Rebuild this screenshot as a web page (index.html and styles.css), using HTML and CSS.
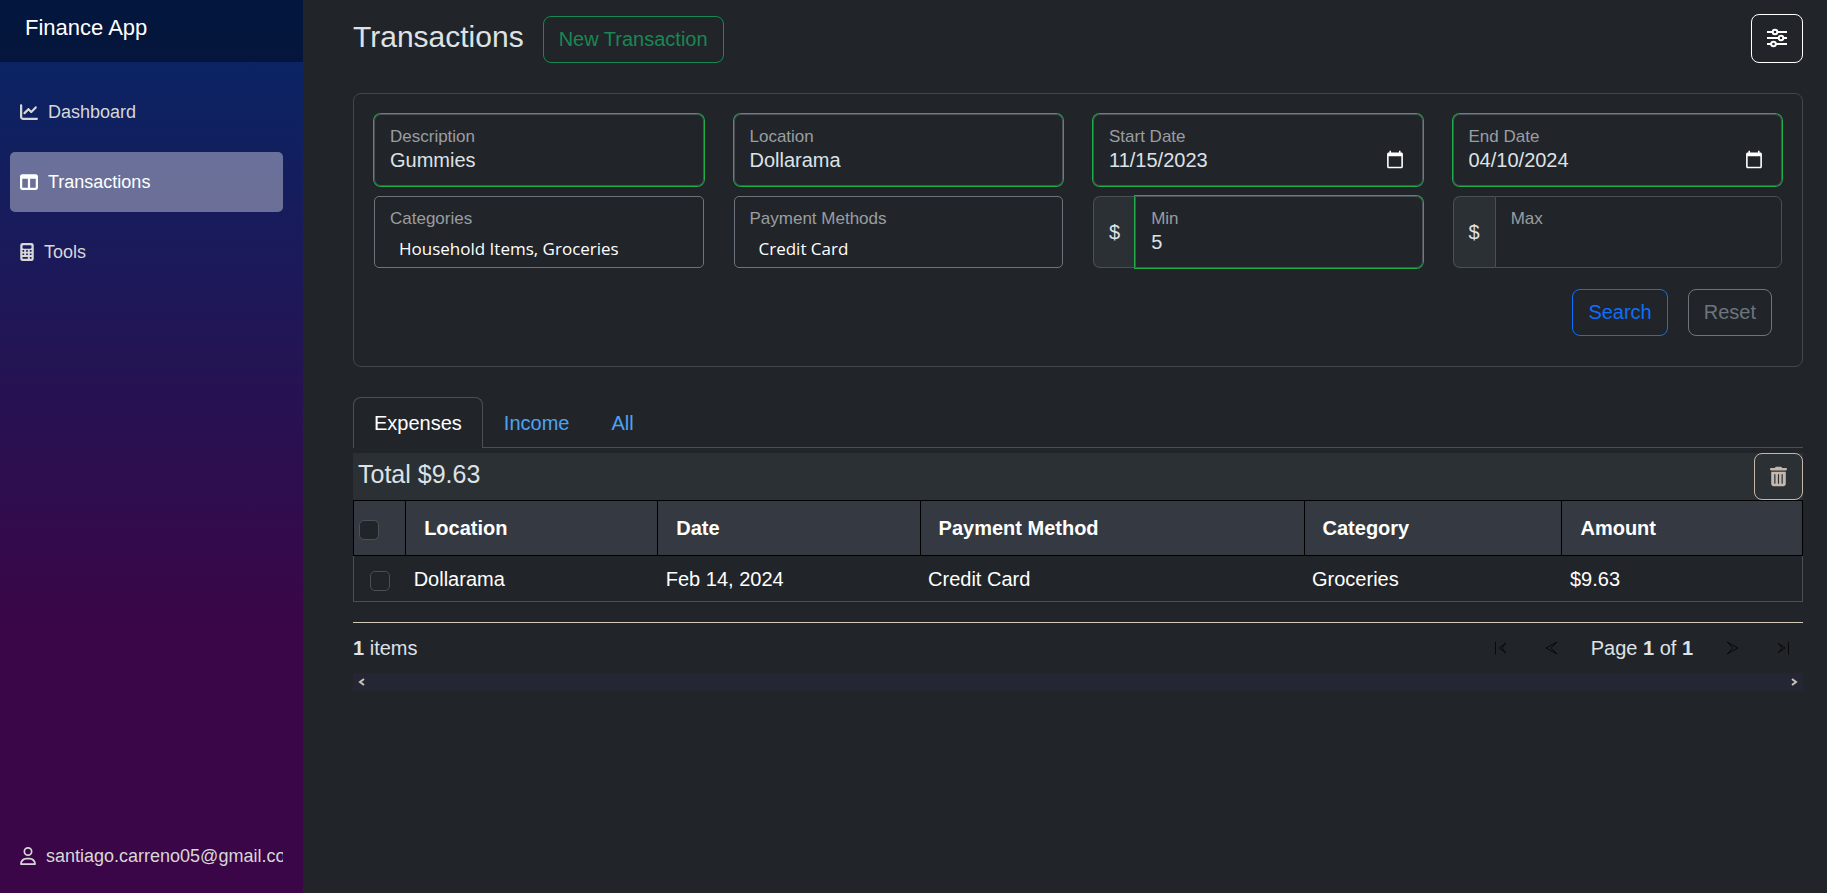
FILE: index.html
```html
<!DOCTYPE html>
<html lang="en">
<head>
<meta charset="utf-8">
<title>Transactions - Finance App</title>
<link rel="stylesheet" href="styles.css">
</head>
<body>
<div class="page">
  <aside class="sidebar">
    <div class="brand-bar"><a class="brand" href="#">Finance App</a></div>
    <nav class="nav">
      <a class="nav-item" href="#">
        <svg class="icon-18" viewBox="0 0 512 512" aria-hidden="true"><path d="M64 64c0-17.700-14.300-32-32-32S0 46.300 0 64V400c0 44.200 35.800 80 80 80H480c17.700 0 32-14.300 32-32s-14.300-32-32-32H80c-8.800 0-16-7.200-16-16V64zm406.600 86.600c12.500-12.500 12.500-32.800 0-45.300s-32.800-12.500-45.300 0L320 210.700l-57.400-57.400c-12.500-12.500-32.800-12.500-45.300 0l-112 112c-12.500 12.500-12.500 32.800 0 45.300s32.800 12.500 45.300 0L240 221.300l57.400 57.400c12.500 12.500 32.800 12.500 45.300 0l128-128z"/></svg>
        Dashboard
      </a>
      <a class="nav-item active" href="#" aria-current="page">
        <svg class="icon-18" viewBox="0 0 512 512" aria-hidden="true"><path d="M0 96C0 60.700 28.700 32 64 32H448c35.300 0 64 28.700 64 64V416c0 35.300-28.700 64-64 64H64c-35.300 0-64-28.700-64-64V96zm64 64V416H224V160H64zm384 0H288V416H448V160z"/></svg>
        Transactions
      </a>
      <a class="nav-item" href="#">
        <svg class="icon-14" viewBox="0 0 384 512" aria-hidden="true"><path fill-rule="evenodd" d="M64 0H320a64 64 0 0 1 64 64V448a64 64 0 0 1-64 64H64a64 64 0 0 1-64-64V64A64 64 0 0 1 64 0zM96 64a32 32 0 0 0-32 32v32a32 32 0 0 0 32 32H288a32 32 0 0 0 32-32V96a32 32 0 0 0-32-32zM64 200v48h48v-48zM168 200v48h48v-48zM272 200v48h48v-48zM64 296v48h48v-48zM168 296v48h48v-48zM272 296v48h48v-48zM64 400v48h152v-48zM272 400v48h48v-48z"/></svg>
        Tools
      </a>
    </nav>
    <a class="nav-item account" href="#">
      <svg class="icon-16" viewBox="0 0 448 512" aria-hidden="true"><path d="M304 128a80 80 0 1 0 -160 0 80 80 0 1 0 160 0zM96 128a128 128 0 1 1 256 0A128 128 0 1 1 96 128zM49.300 464H398.700c-8.900-63.300-63.300-112-129-112H178.300c-65.700 0-120.100 48.700-129 112zM0 482.300C0 383.800 79.800 304 178.300 304h91.400C368.200 304 448 383.800 448 482.300c0 16.400-13.300 29.700-29.700 29.700H29.700C13.300 512 0 498.700 0 482.300z"/></svg>
      <span class="account-name">santiago.carreno05@gmail.com</span>
    </a>
  </aside>

  <main class="content">
    <header class="page-header">
      <h1 class="title">Transactions</h1>
      <button class="btn btn-success" type="button">New Transaction</button>
      <button class="btn btn-filter" type="button" aria-label="Toggle filters">
        <svg class="icon-filter" viewBox="0 0 20 20" aria-hidden="true"><path d="M0 4h5.500M10.500 4H20M0 10h11.500M16.500 10H20M0 16h4M9 16h11"/><circle cx="8" cy="4" r="2.300"/><circle cx="14" cy="10" r="2.300"/><circle cx="6.500" cy="16" r="2.300"/></svg>
      </button>
    </header>

    <form class="filters">
      <div class="filter-grid">
        <div class="field valid">
          <label class="field-label" for="description">Description</label>
          <input class="field-input" id="description" type="text" value="Gummies">
        </div>
        <div class="field valid">
          <label class="field-label" for="location">Location</label>
          <input class="field-input" id="location" type="text" value="Dollarama">
        </div>
        <div class="field valid">
          <label class="field-label" for="start">Start Date</label>
          <input class="field-input" id="start" type="date" value="2023-11-15">
        </div>
        <div class="field valid">
          <label class="field-label" for="end">End Date</label>
          <input class="field-input" id="end" type="date" value="2024-04-10">
        </div>
        <div class="field picker">
          <label class="field-label" for="categories">Categories</label>
          <button class="picker-value" id="categories" type="button">Household Items, Groceries</button>
        </div>
        <div class="field picker">
          <label class="field-label" for="methods">Payment Methods</label>
          <button class="picker-value" id="methods" type="button">Credit Card</button>
        </div>
        <div class="input-group">
          <span class="addon">$</span>
          <div class="field grouped valid">
            <label class="field-label" for="min">Min</label>
            <input class="field-input" id="min" type="text" inputmode="decimal" value="5">
          </div>
        </div>
        <div class="input-group">
          <span class="addon">$</span>
          <div class="field grouped">
            <label class="field-label" for="max">Max</label>
            <input class="field-input" id="max" type="text" inputmode="decimal">
          </div>
        </div>
      </div>
      <div class="filter-actions">
        <button class="btn btn-primary" type="button">Search</button>
        <button class="btn btn-secondary" type="button">Reset</button>
      </div>
    </form>

    <div class="tabs" role="tablist">
      <button class="tab selected" type="button" role="tab" aria-selected="true">Expenses</button>
      <button class="tab" type="button" role="tab" aria-selected="false">Income</button>
      <button class="tab" type="button" role="tab" aria-selected="false">All</button>
    </div>

    <div class="total-bar">
      <span class="total">Total $9.63</span>
      <button class="btn btn-delete" type="button" aria-label="Delete selected">
        <svg class="icon-trash" viewBox="0 0 448 512" aria-hidden="true"><path fill-rule="evenodd" d="M135.200 17.700L128 32H32C14.300 32 0 46.300 0 64S14.300 96 32 96H416c17.700 0 32-14.300 32-32s-14.300-32-32-32H320l-7.200-14.300C307.400 6.800 296.300 0 284.200 0H163.800c-12.100 0-23.200 6.800-28.600 17.700zM32 128H416V448c0 35.300-28.700 64-64 64H96c-35.300 0-64-28.700-64-64V128zm96 64c-8.800 0-16 7.200-16 16V432c0 8.800 7.200 16 16 16s16-7.200 16-16V208c0-8.800-7.200-16-16-16zm96 0c-8.800 0-16 7.200-16 16V432c0 8.800 7.200 16 16 16s16-7.200 16-16V208c0-8.800-7.200-16-16-16zm96 0c-8.800 0-16 7.200-16 16V432c0 8.800 7.200 16 16 16s16-7.200 16-16V208c0-8.800-7.200-16-16-16z"/></svg>
      </button>
    </div>

    <table class="grid">
      <colgroup><col class="col-check"><col class="col-location"><col class="col-date"><col class="col-method"><col class="col-category"><col class="col-amount"></colgroup>
      <thead>
        <tr>
          <th class="check-head"><input class="check" type="checkbox" aria-label="Select all"></th>
          <th>Location</th><th>Date</th><th>Payment Method</th><th>Category</th><th>Amount</th>
        </tr>
      </thead>
      <tbody>
        <tr>
          <td class="check-cell"><input class="check" type="checkbox" aria-label="Select Dollarama"></td>
          <td>Dollarama</td><td>Feb 14, 2024</td><td>Credit Card</td><td>Groceries</td><td>$9.63</td>
        </tr>
      </tbody>
    </table>

    <footer class="pager">
      <div class="count"><strong>1</strong> items</div>
      <button class="page-btn" type="button" disabled aria-label="First page"><svg class="icon-page" viewBox="0 0 14 14" aria-hidden="true"><path d="M1.500 1v12.500M12 2L5 7l7 5M12 2L8 7l4 5"/></svg></button>
      <button class="page-btn" type="button" disabled aria-label="Previous page"><svg class="icon-page" viewBox="0 0 14 14" aria-hidden="true"><path d="M13 1L2 7l11 6M13 1L7 7l6 6"/></svg></button>
      <div class="page-text">Page <strong>1</strong> of <strong>1</strong></div>
      <button class="page-btn" type="button" disabled aria-label="Next page"><svg class="icon-page" viewBox="0 0 14 14" aria-hidden="true"><path d="M1 1l11 6-11 6M1 1l6 6-6 6"/></svg></button>
      <button class="page-btn" type="button" disabled aria-label="Last page"><svg class="icon-page" viewBox="0 0 14 14" aria-hidden="true"><path d="M12.500 1v12.500M2 2l7 5-7 5M2 2l4 5-4 5"/></svg></button>
    </footer>

    <div class="scroll-track">
      <svg class="icon-scroll" viewBox="0 0 8 8" aria-hidden="true"><path d="M6 1L2 4l4 3"/></svg>
      <svg class="icon-scroll" viewBox="0 0 8 8" aria-hidden="true"><path d="M2 1l4 3-4 3"/></svg>
    </div>
  </main>
</div>
</body>
</html>
```
FILE: styles.css
```css
* { box-sizing: border-box; }

body {
  margin: 0;
  background: #212529;
  color: #dee2e6;
  color-scheme: dark;
  font: 20px/30px "Liberation Sans", Arial, sans-serif;
}

button, input { font: inherit; color: inherit; }
svg { display: block; flex: none; fill: currentColor; }

.page { display: flex; min-height: 100vh; }

/* Sidebar */
.sidebar {
  display: flex;
  flex-direction: column;
  flex: none;
  width: 303px;
  padding-bottom: 7px;
  background: linear-gradient(180deg, #052767 0%, #3a0647 70%);
}
.brand-bar { height: 62px; padding: 13px 25px; background: rgba(0, 0, 0, 0.4); }
.brand { color: #fff; font-size: 22px; text-decoration: none; }
.nav { display: flex; flex-direction: column; gap: 10px; padding-top: 20px; }
.nav-item {
  display: flex;
  align-items: center;
  gap: 10px;
  height: 60px;
  margin: 0 20px 0 10px;
  padding-left: 10px;
  border-radius: 5px;
  color: #d7d7d7;
  font-size: 18px;
  text-decoration: none;
}
.nav-item.active { background: rgba(255, 255, 255, 0.37); color: #fff; }
.account { margin-top: auto; }
.account-name { overflow: hidden; white-space: nowrap; }
.icon-18 { width: 18px; height: 18px; }
.icon-16 { width: 16px; height: 18px; }
.icon-14 { width: 14px; height: 18px; }

/* Main column */
.content { flex: 1; min-width: 0; padding: 14px 24px 24px 50px; }
.page-header { display: flex; align-items: flex-end; gap: 19px; margin-bottom: 30px; }
.title { margin: 0; padding-bottom: 4px; font-size: 30px; font-weight: 400; line-height: 45px; }

.btn {
  height: 47px;
  padding: 0 15px 2px;
  border: 1px solid currentColor;
  border-radius: 8px;
  background: transparent;
}
.btn-success { color: #198754; }
.btn-primary { color: #0d6efd; }
.btn-secondary { color: #6c757d; }
.btn-filter { height: 49px; margin-left: auto; color: #fff; }
.btn-delete { padding-bottom: 0; color: #c4b8ae; }
.icon-filter { width: 20px; height: 20px; fill: none; stroke: currentColor; stroke-width: 2; }
.icon-trash { width: 17px; height: 21px; }

/* Filters */
.filters { padding: 20px 20px 30px; border: 1px solid #42474c; border-radius: 8px; }
.filter-grid { display: grid; grid-template-columns: repeat(4, minmax(0, 1fr)); gap: 10px 30px; }
.field {
  display: flex;
  flex-direction: column;
  min-width: 0;
  padding: 12px 15px 13px;
  border: 1px solid #495057;
  border-radius: 7px;
}
.field.valid { box-shadow: 0 0 0 1px #22ac4b; }
.field-label { color: #9a9da1; font-size: 17px; line-height: 20px; }
.field-input {
  width: 100%;
  height: 25px;
  padding: 0;
  border: 0;
  outline: 0;
  background: transparent;
}
.field-input::-webkit-datetime-edit-month-field,
.field-input::-webkit-datetime-edit-day-field,
.field-input::-webkit-datetime-edit-year-field { padding: 0; }
.picker { border-color: #6c757d; border-radius: 5px; padding-bottom: 4px; }
.picker-value {
  height: 34px;
  padding: 6px 9px 0;
  border: 0;
  background: transparent;
  color: #fff;
  font: 17px/26px "Open Sans", "Noto Sans", sans-serif;
  text-align: left;
}
.input-group { display: flex; }
.addon {
  display: flex;
  align-items: center;
  padding: 0 15px;
  border: 1px solid #495057;
  border-right: 0;
  border-radius: 7px 0 0 7px;
  background: #2b3035;
}
.grouped { flex: 1; border-radius: 0 7px 7px 0; }
.filter-actions { display: flex; justify-content: flex-end; gap: 20px; padding: 21px 10px 0; }

/* Tabs */
.tabs { display: flex; margin-top: 30px; border-bottom: 1px solid #495057; }
.tab {
  height: 50px;
  padding: 0 20px;
  border: 1px solid transparent;
  border-bottom: 0;
  border-radius: 8px 8px 0 0;
  background: transparent;
  color: #4da3f0;
}
.tab.selected { margin-bottom: -1px; height: 51px; border-color: #495057; background: #212529; color: #fff; }

/* Grid */
.total-bar { display: flex; justify-content: space-between; margin-top: 5px; background: #2b3035; }
.total { padding: 6px 5px 0; font-size: 25px; }
.grid { width: 100%; table-layout: fixed; border-collapse: collapse; color: #fff; }
.col-check { width: 3.6%; }
.col-location { width: 17.4%; }
.col-date { width: 18.1%; }
.col-method { width: 26.5%; }
.col-category { width: 17.8%; }
.grid th {
  height: 55px;
  padding: 0 18px;
  border: 1px solid #000;
  background: #353a42;
  text-align: left;
}
.grid tbody tr { border: 1px solid #495057; }
.grid td { height: 46px; padding: 0 8px; }
.check {
  display: block;
  appearance: none;
  width: 20px;
  height: 20px;
  margin: 4px 0 0;
  border: 1px solid #495057;
  border-radius: 5px;
  background: #212529;
}
.grid .check-head { padding: 0 5px; }
.grid .check-cell { padding: 0 16px; }

/* Pager */
.pager {
  display: flex;
  align-items: center;
  gap: 10px;
  height: 51px;
  margin-top: 20px;
  border-top: 1px solid #d3c9ba;
}
.count { margin-right: auto; }
.page-text { padding: 0 10px; }
.page-btn {
  display: flex;
  align-items: center;
  justify-content: center;
  width: 40px;
  height: 40px;
  padding: 0;
  border: 0;
  background: transparent;
  color: #08090a;
}
.icon-page { width: 14px; height: 14px; fill: none; stroke: currentColor; stroke-width: 1; }
.scroll-track {
  display: flex;
  align-items: center;
  justify-content: space-between;
  height: 18px;
  padding: 0 5px;
  background: #242733;
}
.icon-scroll { width: 8px; height: 8px; fill: none; stroke: #c9c2b8; stroke-width: 2; }
```
